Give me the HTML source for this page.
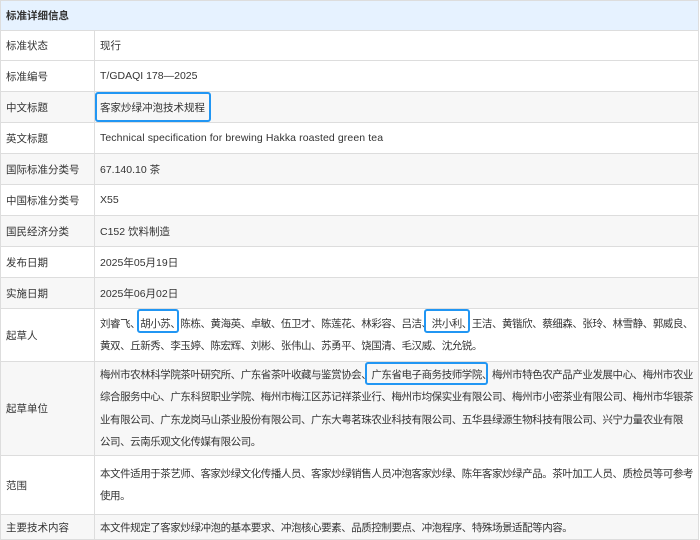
<!DOCTYPE html>
<html><head><meta charset="utf-8"><style>
*{margin:0;padding:0;box-sizing:border-box}
body{width:700px;height:540px;background:#fff;font-family:"Liberation Sans","Noto Sans CJK SC",sans-serif;font-size:10.5px;color:#333;position:relative;overflow:hidden}
.t{position:absolute;left:0;top:0;width:699px;border-top:1px solid #ddd;border-right:1px solid #ddd;border-left:1px solid #ddd}
.r{display:flex;border-bottom:1px solid #ddd}
.l{width:94px;border-right:1px solid #ddd;padding-left:5px;display:flex;align-items:center;flex-shrink:0}
.v{padding:0 0 0 5px;display:flex;align-items:center;flex:1;white-space:nowrap}
.c{letter-spacing:-0.45px}
.g{background:#f7f7f7}
.h{background:#e6f2ff;height:30px;padding-left:5px;display:flex;align-items:center;font-weight:bold;border-bottom:1px solid #ddd}
.m{line-height:22.5px;padding-top:3px;padding-bottom:3px}
.b{position:absolute;border:2px solid #2196f3;border-radius:3px}
</style></head><body>
<div class="t">
<div class="h">标准详细信息</div>
<div class="r" style="height:30px"><div class="l">标准状态</div><div class="v">现行</div></div>
<div class="r" style="height:31px"><div class="l">标准编号</div><div class="v">T/GDAQI 178—2025</div></div>
<div class="r g" style="height:31px"><div class="l">中文标题</div><div class="v">客家炒绿冲泡技术规程</div></div>
<div class="r" style="height:31px"><div class="l">英文标题</div><div class="v" style="letter-spacing:0.1px">Technical specification for brewing Hakka roasted green tea</div></div>
<div class="r g" style="height:31px"><div class="l">国际标准分类号</div><div class="v">67.140.10 茶</div></div>
<div class="r" style="height:31px"><div class="l">中国标准分类号</div><div class="v">X55</div></div>
<div class="r g" style="height:31px"><div class="l">国民经济分类</div><div class="v">C152 饮料制造</div></div>
<div class="r" style="height:31px"><div class="l">发布日期</div><div class="v">2025年05月19日</div></div>
<div class="r g" style="height:31px"><div class="l">实施日期</div><div class="v">2025年06月02日</div></div>
<div class="r" style="height:53px"><div class="l">起草人</div><div class="v m c"><div>刘睿飞、胡小苏、陈栋、黄海英、卓敏、伍卫才、陈莲花、林彩容、吕洁、洪小利、王洁、黄锴欣、蔡细森、张玲、林雪静、郭威良、<br>黄双、丘新秀、李玉婷、陈宏辉、刘彬、张伟山、苏勇平、饶国清、毛汉威、沈允锐。</div></div></div>
<div class="r g" style="height:94px"><div class="l">起草单位</div><div class="v m c"><div>梅州市农林科学院茶叶研究所、广东省茶叶收藏与鉴赏协会、广东省电子商务技师学院、梅州市特色农产品产业发展中心、梅州市农业<br>综合服务中心、广东科贸职业学院、梅州市梅江区苏记祥茶业行、梅州市均保实业有限公司、梅州市小密茶业有限公司、梅州市华银茶<br>业有限公司、广东龙岗马山茶业股份有限公司、广东大粤茗珠农业科技有限公司、五华县绿源生物科技有限公司、兴宁力量农业有限<br>公司、云南乐观文化传媒有限公司。</div></div></div>
<div class="r" style="height:59px"><div class="l">范围</div><div class="v m c"><div>本文件适用于茶艺师、客家炒绿文化传播人员、客家炒绿销售人员冲泡客家炒绿、陈年客家炒绿产品。茶叶加工人员、质检员等可参考<br>使用。</div></div></div>
<div class="r g" style="height:25px"><div class="l">主要技术内容</div><div class="v c">本文件规定了客家炒绿冲泡的基本要求、冲泡核心要素、品质控制要点、冲泡程序、特殊场景适配等内容。</div></div>
</div>
<div class="b" style="left:95px;top:92px;width:116px;height:30px"></div>
<div class="b" style="left:137px;top:309px;width:42px;height:24px"></div>
<div class="b" style="left:424px;top:309px;width:46px;height:24px"></div>
<div class="b" style="left:365px;top:362px;width:123px;height:23px"></div>
</body></html>
